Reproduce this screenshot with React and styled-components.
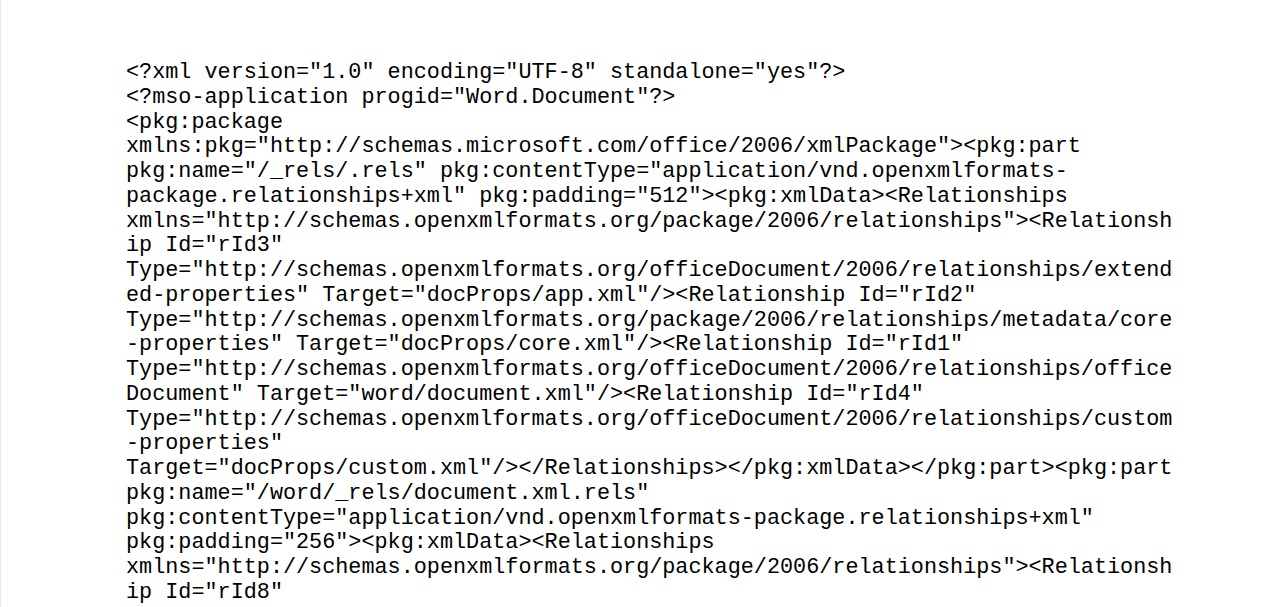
import React from 'react';
import styled, { createGlobalStyle } from 'styled-components';

const GlobalStyle = createGlobalStyle`
  html, body {
    margin: 0;
    padding: 0;
    background: #ffffff;
  }
`;

const lines = [
  '<?xml version="1.0" encoding="UTF-8" standalone="yes"?>',
  '<?mso-application progid="Word.Document"?>',
  '<pkg:package',
  'xmlns:pkg="http://schemas.microsoft.com/office/2006/xmlPackage"><pkg:part',
  'pkg:name="/_rels/.rels" pkg:contentType="application/vnd.openxmlformats-',
  'package.relationships+xml" pkg:padding="512"><pkg:xmlData><Relationships',
  'xmlns="http://schemas.openxmlformats.org/package/2006/relationships"><Relationsh',
  'ip Id="rId3"',
  'Type="http://schemas.openxmlformats.org/officeDocument/2006/relationships/extend',
  'ed-properties" Target="docProps/app.xml"/><Relationship Id="rId2"',
  'Type="http://schemas.openxmlformats.org/package/2006/relationships/metadata/core',
  '-properties" Target="docProps/core.xml"/><Relationship Id="rId1"',
  'Type="http://schemas.openxmlformats.org/officeDocument/2006/relationships/office',
  'Document" Target="word/document.xml"/><Relationship Id="rId4"',
  'Type="http://schemas.openxmlformats.org/officeDocument/2006/relationships/custom',
  '-properties"',
  'Target="docProps/custom.xml"/></Relationships></pkg:xmlData></pkg:part><pkg:part',
  'pkg:name="/word/_rels/document.xml.rels"',
  'pkg:contentType="application/vnd.openxmlformats-package.relationships+xml"',
  'pkg:padding="256"><pkg:xmlData><Relationships',
  'xmlns="http://schemas.openxmlformats.org/package/2006/relationships"><Relationsh',
  'ip Id="rId8"',
];

const Page = styled.div`
  min-height: 607px;
  box-sizing: border-box;
  border-left: 1px solid #e8e8e8;
  padding: 61px 0 0 125px;
  overflow: hidden;
`;

const Source = styled.div`
  font-family: "Courier New", "Nimbus Mono PS", "FreeMono", "Liberation Mono", monospace;
  font-size: 21.8px;
  line-height: 24.75px;
  color: #000000;
`;

const Line = styled.div`
  white-space: pre;
`;

const App = () => {
  return (
    <Page>
      <GlobalStyle />
      <Source>
        {lines.map((line, i) => (
          <Line key={i}>{line}</Line>
        ))}
      </Source>
    </Page>
  );
};

export default App;
